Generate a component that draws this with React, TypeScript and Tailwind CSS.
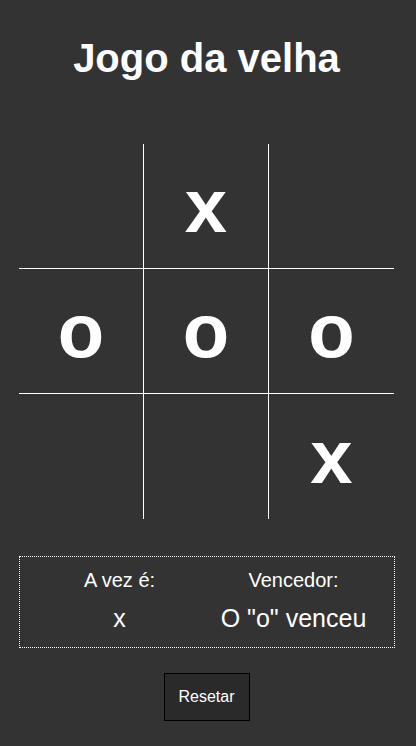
import React, { useState } from "react";

type Mark = "x" | "o" | "";

const initialBoard: Mark[] = ["", "x", "", "o", "o", "o", "", "", "x"];

export default function App() {
  const [board, setBoard] = useState<Mark[]>(initialBoard);
  const [turn, setTurn] = useState<"x" | "o">("x");

  const play = (idx: number) => {
    if (board[idx]) return;
    const next = [...board];
    next[idx] = turn;
    setBoard(next);
    setTurn(turn === "x" ? "o" : "x");
  };

  const reset = () => {
    setBoard(["", "", "", "", "", "", "", "", ""]);
    setTurn("x");
  };

  return (
    <div className="min-h-screen w-full bg-[#333333] text-white font-['Liberation_Sans',Arial,sans-serif]">
      <div className="w-[413px] flex flex-col items-center pt-[35px]">
        {/* titulo */}
        <h1 className="text-[40px] leading-[46px] font-bold">Jogo da velha</h1>

        {/* tabuleiro */}
        <div className="mt-[63px] grid grid-cols-[124px_124px_125px] grid-rows-[124px_124px_125px] gap-px bg-white">
          {board.map((cell, idx) => (
            <div
              key={idx}
              onClick={() => play(idx)}
              className="bg-[#333333] flex items-center justify-center text-[76px] leading-[1.15] font-bold cursor-pointer"
            >
              {cell}
            </div>
          ))}
        </div>

        {/* placar */}
        <div className="mt-[37px] w-[376px] h-[92px] border border-dotted border-white flex justify-center gap-6 pt-[12px]">
          <div className="w-[150px] flex flex-col items-center">
            <span className="text-[20px] leading-[23px]">A vez é:</span>
            <span className="mt-[12px] text-[25px] leading-[29px]">{turn}</span>
          </div>
          <div className="w-[150px] flex flex-col items-center">
            <span className="text-[20px] leading-[23px]">Vencedor:</span>
            <span className="mt-[12px] text-[25px] leading-[29px] whitespace-nowrap">
              O "o" venceu
            </span>
          </div>
        </div>

        {/* botao */}
        <button
          onClick={reset}
          className="mt-[25px] w-[86px] h-[48px] bg-[#2a2a2a] border border-black text-white text-[16px] leading-[18px]"
        >
          Resetar
        </button>
      </div>
    </div>
  );
}
